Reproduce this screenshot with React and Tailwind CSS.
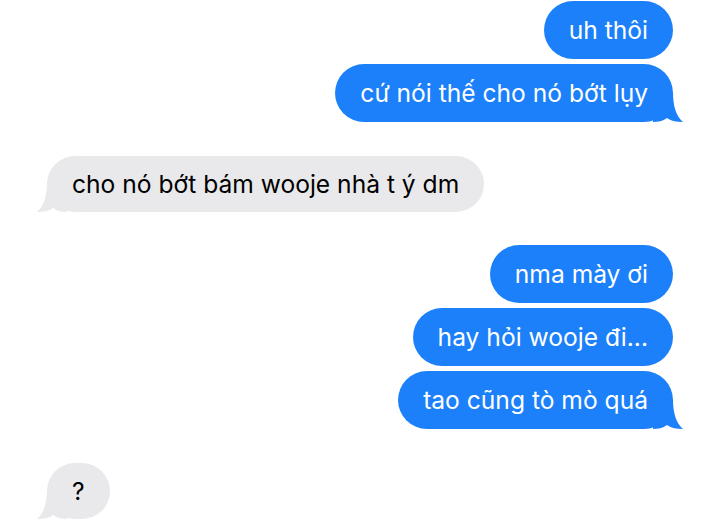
const BLUE = 'bg-[#1b80fa] text-white'
const GRAY = 'bg-[#e9e9eb] text-black'

function Tail({ side }) {
  if (side === 'right') {
    return (
      <svg
        viewBox="0 0 30 30"
        className="absolute bottom-0 right-[-10px] h-[30px] w-[30px] text-[#1b80fa]"
        aria-hidden="true"
      >
        <path fill="currentColor" d="M0 0H20C20 14 23 24 30 30C24 30 18 29 14 26C10 29 5 30 0 30Z" />
      </svg>
    )
  }
  return (
    <svg
      viewBox="0 0 30 30"
      className="absolute bottom-0 left-[-10px] h-[30px] w-[30px] text-[#e9e9eb]"
      aria-hidden="true"
    >
      <path fill="currentColor" d="M30 0H10C10 14 7 24 0 30C6 30 12 29 16 26C20 29 25 30 30 30Z" />
    </svg>
  )
}

function Bubble({ me, tail, children, className = '' }) {
  return (
    <div className={`flex ${me ? 'justify-end' : 'justify-start'} ${className}`}>
      <div
        className={`relative flex items-center px-[25px] text-[24.6px] leading-none ${
          me ? `h-[58px] rounded-[29px] ${BLUE}` : `h-[56px] rounded-[28px] ${GRAY}`
        }`}
      >
        {tail && <Tail side={me ? 'right' : 'left'} />}
        <span className="relative">{children}</span>
      </div>
    </div>
  )
}

export default function App() {
  return (
    <div
      className="flex h-[526px] w-[720px] flex-col overflow-hidden bg-white px-[47px] pt-px"
      style={{ fontFamily: 'Inter, "Noto Sans", sans-serif' }}
    >
      <Bubble me>uh thôi</Bubble>
      <Bubble me tail className="mt-[5px]">cứ nói thế cho nó bớt lụy</Bubble>

      <Bubble tail className="mt-[34px]">cho nó bớt bám wooje nhà t ý dm</Bubble>

      <Bubble me className="mt-[33px]">nma mày ơi</Bubble>
      <Bubble me className="mt-[5px]">hay hỏi wooje đi...</Bubble>
      <Bubble me tail className="mt-[5px]">tao cũng tò mò quá</Bubble>

      <Bubble tail className="mt-[34px]">?</Bubble>
    </div>
  )
}
